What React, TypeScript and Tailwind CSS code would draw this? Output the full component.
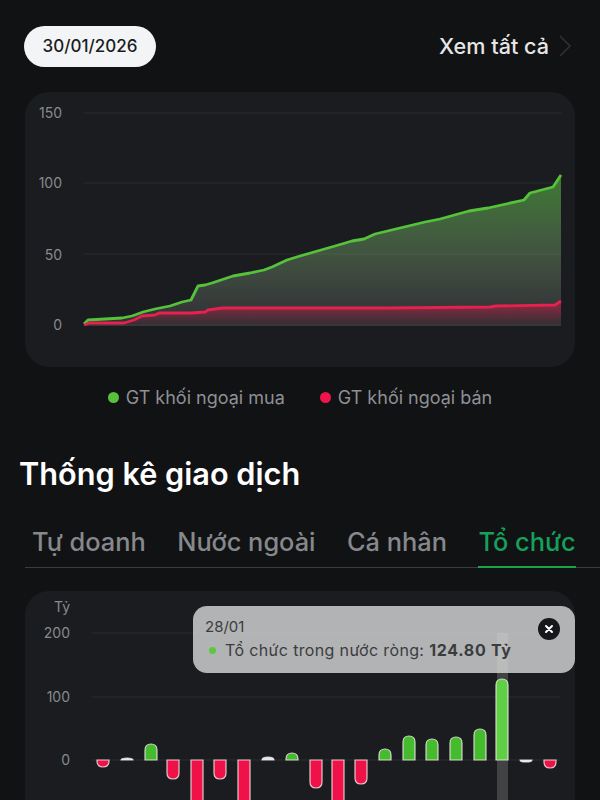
const greenLine =
  "84,324 88,320 122,318 132,316 143,312 155,309 170,306 182,302 191,300 194,294 198,286 205,285 212,283 233,276 250,273 264,270 272,267 287,260 300,256 314,252 335,246 352,241 364,239 375,234 400,228 425,222 440,219 469,211 488,208 524,200 530,193 553,187 561,175";
const redLine =
  "84,325 90,323 124,323 134,320 142,316 155,315 159,313 191,313 205,312 208,310 222,308 386,308 490,307 496,306 555,305 561,301";

const tabs = ["Tự doanh", "Nước ngoài", "Cá nhân"];

// x: tâm cột, h: giá trị so với đường 0 (âm là cột đi xuống)
const bars = [
  { x: 103, h: -7 },
  { x: 127, h: 2 },
  { x: 151, h: 16 },
  { x: 173, h: -19 },
  { x: 197, h: -60 },
  { x: 220, h: -19 },
  { x: 244, h: -60 },
  { x: 268, h: 3 },
  { x: 292, h: 7 },
  { x: 316, h: -28 },
  { x: 338, h: -60 },
  { x: 361, h: -24 },
  { x: 385, h: 11 },
  { x: 409, h: 24 },
  { x: 432, h: 21 },
  { x: 456, h: 23 },
  { x: 480, h: 31 },
  { x: 502, h: 81 },
  { x: 526, h: -2 },
  { x: 550, h: -8 },
];

function barPath(x: number, h: number) {
  const w = 6;
  const zero = 760;
  const end = zero - h;
  const r = Math.min(w, Math.abs(h));
  const dir = h > 0 ? 1 : -1;
  return `M${x - w} ${zero} L${x - w} ${end + dir * r} Q${x - w} ${end} ${x} ${end} Q${x + w} ${end} ${x + w} ${end + dir * r} L${x + w} ${zero} Z`;
}

function barColor(b: { x: number; h: number }) {
  if (Math.abs(b.h) <= 3) return "#e8e8e8";
  if (b.h < 0) return "#ee1248";
  return b.x === 502 ? "#5fd046" : "#45bb2e";
}

function LineChart() {
  return (
    <svg width="550" height="275" viewBox="25 92 550 275" className="block">
      <defs>
        <linearGradient id="greenFill" gradientUnits="userSpaceOnUse" x1="0" y1="175" x2="0" y2="325">
          <stop offset="0" stopColor="#4fae3a" stopOpacity="0.65" />
          <stop offset="1" stopColor="#a8a8a8" stopOpacity="0.14" />
        </linearGradient>
        <linearGradient id="redFill" gradientUnits="userSpaceOnUse" x1="0" y1="301" x2="0" y2="326">
          <stop offset="0" stopColor="#f0144a" stopOpacity="0.5" />
          <stop offset="1" stopColor="#f0144a" stopOpacity="0" />
        </linearGradient>
      </defs>
      {[113, 183, 254, 325].map((y) => (
        <line key={y} x1="84" x2="561" y1={y} y2={y} stroke="#2a2d31" strokeWidth="1" />
      ))}
      {[
        ["150", 118],
        ["100", 188],
        ["50", 260],
        ["0", 330],
      ].map(([label, y]) => (
        <text key={label} x="62" y={y} textAnchor="end" fontSize="14" fill="#888a8d" fontFamily="Inter, sans-serif">
          {label}
        </text>
      ))}
      <polygon points={`${greenLine} 561,326 84,326`} fill="url(#greenFill)" />
      <polygon points={`${redLine} 561,326 84,326`} fill="url(#redFill)" />
      <polyline points={greenLine} fill="none" stroke="#56c23c" strokeWidth="2.8" strokeLinejoin="round" />
      <polyline points={redLine} fill="none" stroke="#e6204f" strokeWidth="2.8" strokeLinejoin="round" />
    </svg>
  );
}

function BarChart() {
  return (
    <svg width="550" height="209" viewBox="25 591 550 209" className="block">
      {[633, 697, 760].map((y) => (
        <line key={y} x1="92" x2="560" y1={y} y2={y} stroke="#2a2d31" strokeWidth="1" />
      ))}
      {[
        ["Tỷ", 612],
        ["200", 638],
        ["100", 702],
        ["0", 765],
      ].map(([label, y]) => (
        <text key={label} x="70" y={y} textAnchor="end" fontSize="14" fill="#888a8d" fontFamily="Inter, sans-serif">
          {label}
        </text>
      ))}
      <rect x="497" y="633" width="11" height="167" fill="#ffffff" fillOpacity="0.17" />
      {bars.map((b) => (
        <path
          key={b.x}
          d={barPath(b.x, b.h)}
          fill={barColor(b)}
          stroke="#f1e6e6"
          strokeOpacity="0.85"
          strokeWidth="1.2"
        />
      ))}
    </svg>
  );
}

export default function App() {
  return (
    <div className="w-[600px] h-[800px] overflow-hidden bg-[#111214] font-['Inter',sans-serif]">
      <div className="flex items-center justify-between pl-6 pr-7 pt-[26px]">
        <div className="flex h-[41px] w-[132px] items-center justify-center rounded-[21px] bg-[#f3f4f6] text-[17px] font-medium text-[#1b1c1f]">
          30/01/2026
        </div>
        <div className="flex items-center gap-[9px] text-[21.6px] font-medium text-[#e6e6e6]">
          Xem tất cả
          <svg width="14" height="24" viewBox="0 0 14 24" fill="none" stroke="#2f3134" strokeWidth="1.6">
            <path d="M2 2l10 10L2 22" />
          </svg>
        </div>
      </div>

      <div className="ml-[25px] mt-[25px] h-[275px] w-[550px] overflow-hidden rounded-3xl bg-[#1a1c1f]">
        <LineChart />
      </div>

      <div className="mt-[17px] flex justify-center gap-[35px] text-[18px] text-[#8e9094]">
        <div className="flex items-center gap-[7px]">
          <span className="h-[11px] w-[11px] rounded-full bg-[#56c23c]" />
          GT khối ngoại mua
        </div>
        <div className="flex items-center gap-[7px]">
          <span className="h-[11px] w-[11px] rounded-full bg-[#f0144a]" />
          GT khối ngoại bán
        </div>
      </div>

      <h2 className="ml-[19px] mt-[45px] text-[30.7px] leading-[36px] font-semibold text-white">Thống kê giao dịch</h2>

      <div className="ml-[25px] mt-[35px] flex border-b border-[#3a3c3f] pl-[7px]">
        <div className="flex gap-[31.4px] text-[25.4px] leading-[30px] font-medium text-[#86888c]">
          {tabs.map((tab) => (
            <span key={tab} className="pb-[10px]">
              {tab}
            </span>
          ))}
          <span className="-mb-px border-b-2 border-[#16a34a] pb-[9px] text-[#16a05a]">Tổ chức</span>
        </div>
      </div>

      <div className="relative ml-[25px] mt-[23px] w-[550px] rounded-t-3xl bg-[#1a1c1f]">
        <BarChart />
        <div className="absolute left-[168px] top-[15px] h-[67px] w-[382px] rounded-[14px] bg-[#d8d9da]/80 pl-3 pt-[11px] text-[15px] text-[#3b3c3f]">
          <div className="leading-[20px]">28/01</div>
          <div className="mt-[3px] flex items-center text-[16px] leading-[20px] tracking-[0.35px]">
            <span className="ml-1 mr-[9px] h-[7px] w-[7px] rounded-full bg-[#5cc83f]" />
            Tổ chức trong nước ròng:&nbsp;<b className="font-bold tracking-[0.7px]">124.80 Tỷ</b>
          </div>
          <div className="absolute right-[15px] top-[12px] flex h-[22px] w-[22px] items-center justify-center rounded-full bg-[#17181b]">
            <svg width="10" height="10" viewBox="0 0 10 10" stroke="#ffffff" strokeWidth="2" strokeLinecap="round">
              <path d="M2 2l6 6M8 2l-6 6" />
            </svg>
          </div>
        </div>
      </div>
    </div>
  );
}
